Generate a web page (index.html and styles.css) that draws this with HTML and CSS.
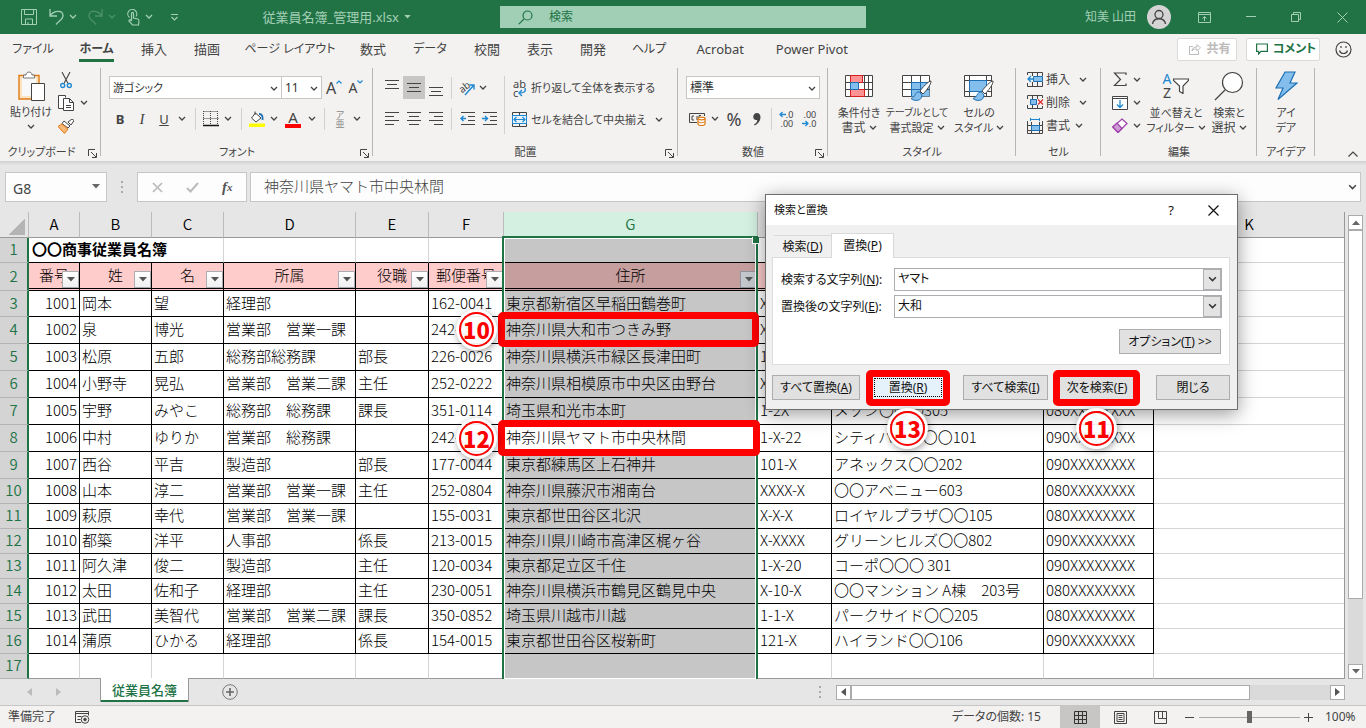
FILE: index.html
```html
<!DOCTYPE html>
<html lang="ja">
<head>
<meta charset="utf-8">
<title>従業員名簿_管理用.xlsx</title>
<link rel="stylesheet" href="styles.css">
</head>
<body>
<svg class="defs" aria-hidden="true">
  <symbol id="chev" viewBox="0 0 8 6"><path d="M1 1l3 3 3-3" fill="none" stroke="currentColor" stroke-width="1.3"/></symbol>
  <symbol id="launch" viewBox="0 0 9 9"><path d="M.5 7V.5H7M3 3l5 5M8.5 4v4.500H4" fill="none" stroke="#444"/></symbol>
  <symbol id="tri" viewBox="0 0 8 5"><path d="M0 0h8L4 4.500z" fill="currentColor"/></symbol>
  <symbol id="brush" viewBox="0 0 22 22"><path d="M21 1c-2-.5-9 7-11 10l3 3C16 11 21.500 4 21 1z" fill="#fff" stroke="#444"/><path d="M9.500 12C5 11 6 17 1 18.500c3 3 11 3 11-3.500z" fill="#83beec" stroke="#1e6fb4"/></symbol>
</svg>
<div class="app">
  <header class="titlebar">
    <div class="qat">
      <button aria-label="上書き保存"><svg width="18" height="18" viewBox="0 0 18 18" fill="none" stroke="currentColor"><path d="M1.500 1.500h15v15h-15zM4.500 1.500v5h9v-5M5.500 16v-5h7v5M8 16v-2"/></svg></button>
      <button aria-label="元に戻す"><svg width="15" height="16" viewBox="0 0 15 16" fill="none" stroke="currentColor" stroke-width="1.300"><path d="M1 0v7h7M1 7C4 2 13 0 14 6c.5 4-4 6-7 9.500"/></svg></button>
      <button aria-label="元に戻す履歴"><svg width="8" height="6"><use href="#chev"/></svg></button>
      <button class="dim" aria-label="やり直し"><svg width="15" height="16" viewBox="0 0 15 16" fill="none" stroke="currentColor" stroke-width="1.300"><path d="M14 0v7H7M14 7C11 2 2 0 1 6c-.5 4 4 6 7 9.500"/></svg></button>
      <button class="dim" aria-label="やり直し履歴"><svg width="8" height="6"><use href="#chev"/></svg></button>
      <button aria-label="タッチ/マウス"><svg width="13" height="17" viewBox="0 0 13 17" fill="none" stroke="currentColor" stroke-width="1.200"><path d="M2.500 8.500A4.500 4.500 0 1 1 9 7.500M4.500 12V4.500c0-1.500 2-1.500 2 0V9l4.500 1c1.500.5 1 3 .5 6H5.500L2 12c0-2 2-1 2.500 0"/></svg></button>
      <button aria-label="モード"><svg width="8" height="6"><use href="#chev"/></svg></button>
      <button aria-label="カスタマイズ"><svg width="9" height="9" viewBox="0 0 9 9" fill="none" stroke="currentColor" stroke-width="1.200"><path d="M1 1.500h7M1.500 4l3 3 3-3"/></svg></button>
      <span class="doc">従業員名簿_管理用.xlsx</span><svg width="7" height="4"><use href="#tri"/></svg>
    </div>
    <label class="search"><svg width="15" height="15" viewBox="0 0 15 15" fill="none" stroke="currentColor" stroke-width="1.200"><circle cx="9.500" cy="5.500" r="4.500"/><path d="M6 9L.8 14.200"/></svg><input type="text" placeholder="検索" aria-label="検索"></label>
    <div class="win">
      <span>知美 山田</span>
      <svg class="avatar" width="24" height="24" viewBox="0 0 24 24"><circle cx="12" cy="12" r="12" fill="#d4d4d4"/><g fill="none" stroke="#444" stroke-width="1.300"><circle cx="12" cy="9.500" r="4"/><path d="M5.500 19c1-7 12-7 13 0"/></g></svg>
      <button aria-label="リボンの表示オプション"><svg width="13" height="11" viewBox="0 0 13 11" fill="none" stroke="currentColor"><path d="M.5.5h12v10H.5zM.5 2.500h12M6.500 9V4.500M4.500 6.500l2-2 2 2"/></svg></button>
      <button aria-label="最小化"><svg width="10" height="2"><path d="M0 .5h10" stroke="currentColor"/></svg></button>
      <button aria-label="元に戻す(縮小)"><svg width="11" height="11" viewBox="0 0 11 11" fill="none" stroke="currentColor"><path d="M.5 2.500h7v7h-7zM2.500 2.500v-2h7v7h-2"/></svg></button>
      <button aria-label="閉じる"><svg width="11" height="11" viewBox="0 0 11 11"><path d="M.5.5l10 10M10.500.5l-10 10" stroke="currentColor"/></svg></button>
    </div>
  </header>

  <nav class="tabs">
    <button class="kana">ファイル</button><button class="on">ホーム</button><button>挿入</button><button>描画</button><button class="kana">ページ レイアウト</button><button>数式</button><button class="kana">データ</button><button>校閲</button><button>表示</button><button>開発</button><button class="kana">ヘルプ</button><button class="lat">Acrobat</button><button class="lat">Power Pivot</button>
    <div class="tabs-right">
      <button class="share"><svg width="12" height="12" viewBox="0 0 12 12" fill="none" stroke="currentColor"><path d="M4 3.500H.5v8h9V8M3 8c0-3 2-4 5-4V1.500L11.500 5 8 8V6C6 6 4 6 3 8z"/></svg>共有</button>
      <button class="comment"><svg width="12" height="12" viewBox="0 0 12 12" fill="none" stroke="currentColor" stroke-width="1.200"><path d="M.6 1h10.800v7.400H5L2.600 11V8.400h-2z"/></svg>コメント</button>
      <svg width="17" height="17" viewBox="0 0 17 17" fill="none" stroke="#444" stroke-width="1.200"><circle cx="8.500" cy="8.500" r="7.500"/><path d="M4.500 9.500c1 4 7 4 8 0M6 5v2M11 5v2" /></svg>
    </div>
  </nav>

  <section class="ribbon">
    <div class="group g-clip">
      <div class="g-body">
        <button class="big"><svg width="28" height="32" viewBox="0 0 28 32"><path d="M2 5.500h20V29H2z" fill="#fbe3c2" stroke="#e07b12" stroke-width="1.400"/><path d="M5 8h14v18H5z" fill="#f8f8f8"/><path d="M6.500 8V5H9c0-4 6-4 6 0h2.500v3z" fill="#fff" stroke="#777"/><path d="M14.500 13.500h13v17h-13z" fill="#fff" stroke="#444"/></svg><span class="tight">貼り付け</span><svg width="8" height="6"><use href="#chev"/></svg></button>
        <div class="clip-col">
          <button aria-label="切り取り"><svg width="12" height="17" viewBox="0 0 12 17" fill="none"><path d="M2 0l6 11.500M10 0L4 11.500" stroke="#444" stroke-width="1.100"/><circle cx="2.700" cy="13.500" r="2" stroke="#1e88d2" stroke-width="1.400"/><circle cx="9.300" cy="13.500" r="2" stroke="#1e88d2" stroke-width="1.400"/></svg></button>
          <button aria-label="コピー"><svg width="17" height="16" viewBox="0 0 17 16" fill="#fff" stroke="#444"><path d="M7 13.500H.5V.5h7v2"/><path d="M5.500 3.500h6l4 4v8h-10zM11.500 3.500v4h4M8 10.500h5M8 12.500h5"/></svg></button>
          <svg width="8" height="6"><use href="#chev"/></svg>
          <button aria-label="書式のコピー"><svg width="16" height="15" viewBox="0 0 16 15"><path d="M10 3l4-3 2 1.500L13 6z" fill="#fff" stroke="#444"/><path d="M6 2l6 5-2 2-6-4.500z" fill="#fff" stroke="#444"/><path d="M4 5l6 5-3.500 4.500L0 7.500z" fill="#f7b879" stroke="#e07b12"/></svg></button>
        </div>
      </div>
      <div class="g-name">クリップボード<svg width="9" height="9"><use href="#launch"/></svg></div>
    </div>

    <div class="group g-font">
      <div class="g-body rows">
        <div class="font1">
          <span class="sel"><select aria-label="フォント"><option>游ゴシック</option></select><svg width="8" height="6"><use href="#chev"/></svg></span>
          <span class="sel"><select aria-label="フォント サイズ"><option>11</option></select><svg width="8" height="6"><use href="#chev"/></svg></span>
          <button class="cap" aria-label="拡大">A<svg width="6" height="4" viewBox="0 0 6 4"><path d="M.5 3.500L3 1l2.500 2.500" fill="none" stroke="#1e88d2" stroke-width="1.200"/></svg></button>
          <button class="cap small" aria-label="縮小">A<svg width="6" height="4" viewBox="0 0 6 4"><path d="M.5.5L3 3 5.500.5" fill="none" stroke="#1e88d2" stroke-width="1.200"/></svg></button>
        </div>
        <div class="font2">
          <button><b>B</b></button><button class="ital">I</button><button><u>U</u></button><svg width="8" height="6"><use href="#chev"/></svg><i class="sep"></i>
          <button aria-label="罫線"><svg width="16" height="16" viewBox="0 0 16 16" stroke="#444" fill="none"><path d="M.5.5h14.500M.5 7.500h15M.5 0v14M7.500 0v14M14.500 0v14" stroke-dasharray="1 1"/><path d="M0 14.500h16" stroke="#111" stroke-width="1.500"/></svg></button><svg width="8" height="6"><use href="#chev"/></svg><i class="sep"></i>
          <button aria-label="塗りつぶし"><svg width="16" height="16" viewBox="0 0 16 16"><path d="M6.500 2L12 7l-5 4-4.500-4zM6 4V.5" fill="#fff" stroke="#444"/><path d="M10 3c3 0 4 2 3.500 6" fill="none" stroke="#1e6fb4" stroke-width="1.800"/><path d="M0 12.500h16V16H0z" fill="#ff0"/></svg></button><svg width="8" height="6"><use href="#chev"/></svg>
          <button class="fcolor" aria-label="フォントの色">A</button><svg width="8" height="6"><use href="#chev"/></svg><i class="sep"></i>
          <button class="ruby"><span>ア</span><span>亜</span></button><svg width="8" height="6"><use href="#chev"/></svg>
        </div>
      </div>
      <div class="g-name">フォント<svg width="9" height="9"><use href="#launch"/></svg></div>
    </div>

    <div class="group g-align">
      <div class="g-body">
        <div class="align-l">
          <button aria-label="上揃え"><svg width="14" height="20" stroke="#444"><path d="M0 2.500h14M2 6.500h10M0 10.500h14"/></svg></button>
          <button class="pressed" aria-label="上下中央揃え"><svg width="14" height="20" stroke="#444"><path d="M0 5.500h14M2 9.500h10M0 13.500h14"/></svg></button>
          <button aria-label="下揃え"><svg width="14" height="20" stroke="#444"><path d="M0 9.500h14M2 13.500h10M0 17.500h14"/></svg></button>
          <i class="sep"></i>
          <button aria-label="方向"><svg class="over" width="17" height="16" viewBox="0 0 17 16"><text x="0" y="11" font-size="10" fill="#444" transform="rotate(-38 5 8)">ab</text><path d="M6 15L15 5M10.500 5H15v4.500" fill="none" stroke="#1e88d2" stroke-width="1.400"/></svg></button>
          <svg class="left" width="8" height="6"><use href="#chev"/></svg>
          <button aria-label="左揃え"><svg width="14" height="14" stroke="#444"><path d="M0 .5h14M0 4.500h9M0 8.500h14M0 12.500h9"/></svg></button>
          <button aria-label="中央揃え"><svg width="14" height="14" stroke="#444"><path d="M0 .5h14M2 4.500h10M0 8.500h14M2 12.500h10"/></svg></button>
          <button aria-label="右揃え"><svg width="14" height="14" stroke="#444"><path d="M0 .5h14M5 4.500h9M0 8.500h14M5 12.500h9"/></svg></button>
          <i class="sep"></i>
          <button aria-label="インデントを減らす"><svg width="15" height="14" fill="none" stroke="#444"><path d="M1 .5h14M8 4.500h7M8 8.500h7M1 12.500h14"/><path d="M6 6.500H.8M3.500 4L1 6.500 3.500 9" stroke="#1e88d2" stroke-width="1.400"/></svg></button>
          <button aria-label="インデントを増やす"><svg width="15" height="14" fill="none" stroke="#444"><path d="M1 .5h14M8 4.500h7M8 8.500h7M1 12.500h14"/><path d="M0 6.500h5.500M3 4l2.500 2.500L3 9" stroke="#1e88d2" stroke-width="1.400"/></svg></button>
        </div>
        <div class="align-r">
          <button><span class="wrap-ico"><span>ab</span><span>c<svg width="8" height="9" viewBox="0 0 8 9"><path d="M7 0c1 4-1 5-6 5M4 2L1 5l3 3" fill="none" stroke="#1e88d2" stroke-width="1.400"/></svg></span></span><span>折り返して全体を表示する</span></button>
          <button><svg width="15" height="15" viewBox="0 0 15 15" fill="none"><path d="M.5.5h14v14H.5zM7.500 0v15" stroke="#444"/><path d="M.5 3.500h14v8H.5z" fill="#e8f3fb" stroke="#1e88d2"/><path d="M2 7.500h11M4.500 5L2 7.500 4.500 10M10.500 5L13 7.500 10.500 10" stroke="#1e88d2" stroke-width="1.200"/></svg><span>セルを結合して中央揃え</span><svg width="8" height="6"><use href="#chev"/></svg></button>
        </div>
      </div>
      <div class="g-name">配置<svg width="9" height="9"><use href="#launch"/></svg></div>
    </div>

    <div class="group g-num">
      <div class="g-body rows">
        <span class="sel"><select aria-label="表示形式"><option>標準</option></select><svg width="8" height="6"><use href="#chev"/></svg></span>
        <div class="num2">
          <button aria-label="通貨"><svg width="17" height="14" viewBox="0 0 17 14" fill="none"><path d="M8 10.500H.5v-9h15V4" stroke="#444"/><path d="M5 4H3v4h2M8 4v4M12 3.500H10V6" stroke="#444"/><path d="M9 6.500v5.500c0 2 7 2 7 0V6.500" fill="#fff" stroke="#e07b12" stroke-width="1.200"/><ellipse cx="12.500" cy="6.500" rx="3.500" ry="1.300" fill="#fff" stroke="#e07b12" stroke-width="1.200"/><path d="M9 9.500c0 1.500 7 1.500 7 0" stroke="#e07b12"/></svg></button>
          <svg width="8" height="6"><use href="#chev"/></svg>
          <button class="pct">%</button>
          <button aria-label="桁区切り"><svg width="8" height="13" viewBox="0 0 8 13"><path d="M4 0c5 0 5 9-2.500 12.500l-.5-1C4 10 4.500 8 4 7-1 8-1 0 4 0z" fill="#444"/></svg></button>
          <i class="sep"></i>
          <button class="dec"><span><svg width="7" height="7" viewBox="0 0 7 7"><path d="M7 3.500H1M3.500 1L1 3.500 3.500 6" fill="none" stroke="#1e88d2" stroke-width="1.300"/></svg>.0</span><span>.00</span></button>
          <button class="dec"><span>.00</span><span><svg width="7" height="7" viewBox="0 0 7 7"><path d="M0 3.500h6M3.500 1L6 3.500 3.500 6" fill="none" stroke="#1e88d2" stroke-width="1.300"/></svg>.0</span></button>
        </div>
      </div>
      <div class="g-name">数値<svg width="9" height="9"><use href="#launch"/></svg></div>
    </div>

    <div class="group g-style">
      <div class="g-body">
        <button class="big"><svg width="28" height="30" viewBox="0 0 28 30" fill="none"><path d="M.5 4.500h27v21H.5zM.5 11.500h27M.5 18.500h27M5.500 4v21M19.500 4v21M23.500 4v21" fill="#fff" stroke="#444"/><path d="M5.500 4.500h12v7h-12zM5.500 18.500h14v7h-14z" fill="#ff9393" stroke="#d62020"/><path d="M5.500 11.500h8v7h-8z" fill="#83beec" stroke="#1e6fb4"/></svg><span class="tight">条件付き</span><span>書式 <svg width="8" height="6"><use href="#chev"/></svg></span></button>
        <button class="big tight"><svg width="30" height="30" viewBox="0 0 30 30" fill="none"><path d="M.5 4.500h27v21H.5z" fill="#fff" stroke="#444"/><path d="M9.500 11.500h18v14h-18z" fill="#83beec"/><path d="M.5 11.500h27M.5 18.500h27M9.500 4v21M18.500 4v21" stroke="#444"/><path d="M9.500 11.500h18M9.500 18.500h10M9.500 11v14M18.500 11v7" stroke="#1e6fb4"/><use href="#brush" x="8" y="9" width="22" height="22"/></svg><span class="tiny">テーブルとして</span><span>書式設定 <svg width="8" height="6"><use href="#chev"/></svg></span></button>
        <button class="big tight"><svg width="30" height="30" viewBox="0 0 30 30" fill="none"><path d="M.5 4.500h27v21H.5zM.5 9.500h27M.5 20.500h27M5.500 4v21M22.500 4v21" fill="#fff" stroke="#444"/><path d="M5.500 9.500h17v11h-17z" fill="#83beec" stroke="#1e6fb4"/><use href="#brush" x="8" y="9" width="22" height="22"/></svg><span>セルの</span><span>スタイル <svg width="8" height="6"><use href="#chev"/></svg></span></button>
      </div>
      <div class="g-name">スタイル</div>
    </div>

    <div class="group g-cell">
      <div class="g-body">
        <button><svg width="17" height="15" viewBox="0 0 17 15" fill="none"><path d="M.5 3V.5h15V4M5.500 0v4M10.500 0v4M.5 11v3.500h15V10M5.500 10v4M10.500 10v4" stroke="#444"/><path d="M6.500 4.500h9v5h-9z" fill="#83beec" stroke="#1e6fb4"/><path d="M7 7H1M4 4L1 7l3 3" stroke="#1e88d2" stroke-width="1.300"/></svg><span>挿入</span><svg width="8" height="6"><use href="#chev"/></svg></button>
        <button><svg width="17" height="15" viewBox="0 0 17 15" fill="none"><path d="M.5 4V.5h15V3M5.500 0v4M10.500 0v4M.5 10v3.500h15V11M5.500 10v4M10.500 10v4" stroke="#444"/><path d="M3.500 4.500h6v5h-6z" fill="#83beec" stroke="#1e6fb4"/><path d="M11 4.500l5 5M16 4.500l-5 5" stroke="#e03030" stroke-width="1.300"/></svg><span>削除</span><svg width="8" height="6"><use href="#chev"/></svg></button>
        <button class="near"><svg width="17" height="16" viewBox="0 0 17 16" fill="none"><path d="M.5 3v12.500h15V3M.5 7.500h15M.5 12.500h15M4.500 4v11M12.500 4v11" stroke="#444"/><path d="M4.500 7.500h8v5h-8z" fill="#83beec" stroke="#1e6fb4"/><path d="M3 1.500h10M3.500 0v3M12.500 0v3" stroke="#1e88d2"/></svg><span>書式</span><svg width="8" height="6"><use href="#chev"/></svg></button>
      </div>
      <div class="g-name">セル</div>
    </div>

    <div class="group g-edit">
      <div class="g-body">
        <div class="edit-col">
          <button aria-label="合計"><svg width="16" height="15" viewBox="0 0 16 15"><path d="M14 3V1H2.500l6 6.500-6 6H14v-2" fill="none" stroke="#444" stroke-width="1.200"/></svg><svg width="8" height="6"><use href="#chev"/></svg></button>
          <button aria-label="フィル"><svg width="16" height="14" viewBox="0 0 16 14" fill="none"><path d="M.5.5h15v13H.5zM.5 2.500h15" fill="#fff" stroke="#444"/><path d="M8 4v7M5 8.500L8 11.500l3-3" stroke="#1e88d2" stroke-width="1.300"/></svg><svg width="8" height="6"><use href="#chev"/></svg></button>
          <button aria-label="クリア"><svg width="16" height="15" viewBox="0 0 16 15" fill="#fff" stroke="#9b3fa8" stroke-width="1.200"><path d="M10 1l5 4.500L6 14.500.8 9z"/><path d="M.8 9L5 5l5 5.500-4 4z" fill="#cf9ad6"/></svg><svg width="8" height="6"><use href="#chev"/></svg></button>
        </div>
        <button class="big tight"><span class="sort-ico"><span class="az"><span class="blue">A</span><span>Z</span></span><svg width="16" height="16" viewBox="0 0 16 16"><path d="M.5 1h15v1.500L10 8v7.500L6.500 13.500V8L.5 2.500z" fill="#fff" stroke="#444" stroke-width="1.200"/></svg></span><span>並べ替えと</span><span>フィルター <svg width="8" height="6"><use href="#chev"/></svg></span></button>
        <button class="big"><svg width="30" height="30" viewBox="0 0 30 30"><circle cx="18.500" cy="11.500" r="10" fill="#fff" stroke="#444" stroke-width="1.200"/><path d="M11 19L1 29" stroke="#444" stroke-width="1.300"/></svg><span class="tight">検索と</span><span>選択 <svg width="8" height="6"><use href="#chev"/></svg></span></button>
      </div>
      <div class="g-name">編集</div>
    </div>

    <div class="group g-idea">
      <div class="g-body"><button class="big tight"><svg width="24" height="30" viewBox="0 0 24 30"><path d="M11 1h10l-5 11h7L4 28.500 9 17H2z" fill="#83beec" stroke="#1e6fb4" stroke-width="1.200"/></svg><span>アイ</span><span>デア</span></button></div>
      <div class="g-name">アイデア</div>
    </div>
    <button class="collapse" aria-label="リボンを折りたたむ"><svg width="10" height="6" viewBox="0 0 10 6"><path d="M.5 5.500L5 1l4.500 4.500" fill="none" stroke="#444" stroke-width="1.200"/></svg></button>
  </section>

  <section class="fbar">
    <div class="namebox"><input type="text" value="G8" aria-label="名前ボックス"><button aria-label="名前一覧"><svg width="8" height="5"><use href="#tri"/></svg></button></div>
    <span class="dots"></span>
    <div class="fx">
      <button aria-label="キャンセル"><svg width="11" height="11"><path d="M1 1l9 9M10 1l-9 9" stroke="#bbb" stroke-width="1.700"/></svg></button>
      <button aria-label="入力"><svg width="13" height="11"><path d="M1 6l3.500 3.500L12 1" stroke="#bbb" stroke-width="2" fill="none"/></svg></button>
      <button class="fn">f<small>x</small></button>
    </div>
    <div class="formula"><input type="text" value="神奈川県ヤマト市中央林間" aria-label="数式バー"><svg width="9" height="7"><use href="#chev"/></svg></div>
  </section>

  <main class="sheet">
    <div class="grid">
      <table>
        <colgroup><col class="w-h"><col class="w-a"><col class="w-b"><col class="w-b"><col class="w-d"><col class="w-e"><col class="w-f"><col class="w-g"><col class="w-i"><col class="w-j"><col class="w-k"><col></colgroup>
        <thead><tr><th class="corner"></th><th>A</th><th>B</th><th>C</th><th>D</th><th>E</th><th>F</th><th class="selcol">G</th><th>H</th><th>I</th><th>J</th><th>K</th></tr></thead>
        <tbody>
        <tr class="r-title"><th>1</th><td colspan="3">〇〇商事従業員名簿</td><td></td><td></td><td></td><td></td><td></td><td></td><td></td><td></td></tr>
        <tr class="r-head"><th>2</th><td>番号<button aria-label="フィルター"><svg width="8" height="5"><use href="#tri"/></svg></button></td><td>姓<button aria-label="フィルター"><svg width="8" height="5"><use href="#tri"/></svg></button></td><td>名<button aria-label="フィルター"><svg width="8" height="5"><use href="#tri"/></svg></button></td><td>所属<button aria-label="フィルター"><svg width="8" height="5"><use href="#tri"/></svg></button></td><td>役職<button aria-label="フィルター"><svg width="8" height="5"><use href="#tri"/></svg></button></td><td>郵便番号<button aria-label="フィルター"><svg width="8" height="5"><use href="#tri"/></svg></button></td><td>住所<button aria-label="フィルター"><svg width="8" height="5"><use href="#tri"/></svg></button></td><td></td><td></td><td></td><td></td></tr>
        <tr class="r-first"><th>3</th><td>1001</td><td>岡本</td><td>望</td><td>経理部</td><td></td><td>162-0041</td><td>東京都新宿区早稲田鶴巻町</td><td>X</td><td></td><td></td><td></td></tr>
        <tr class="tall"><th>4</th><td>1002</td><td>泉</td><td>博光</td><td>営業部　営業一課</td><td></td><td>242-0</td><td>神奈川県大和市つきみ野</td><td>X</td><td></td><td></td><td></td></tr>
        <tr class="tall"><th>5</th><td>1003</td><td>松原</td><td>五郎</td><td>総務部総務課</td><td>部長</td><td>226-0026</td><td>神奈川県横浜市緑区長津田町</td><td>1</td><td></td><td></td><td></td></tr>
        <tr class="tall"><th>6</th><td>1004</td><td>小野寺</td><td>晃弘</td><td>営業部　営業二課</td><td>主任</td><td>252-0222</td><td>神奈川県相模原市中央区由野台</td><td>X</td><td></td><td></td><td></td></tr>
        <tr class="tall"><th>7</th><td>1005</td><td>宇野</td><td>みやこ</td><td>総務部　総務課</td><td>課長</td><td>351-0114</td><td>埼玉県和光市本町</td><td>1-2X</td><td>メゾン〇〇〇305</td><td>080XXXXXXXX</td><td></td></tr>
        <tr class="tall"><th>8</th><td>1006</td><td>中村</td><td>ゆりか</td><td>営業部　総務課</td><td></td><td>242-0</td><td class="active">神奈川県ヤマト市中央林間</td><td>1-X-22</td><td>シティハイツ〇〇101</td><td>090XXXXXXXX</td><td></td></tr>
        <tr class="tall"><th>9</th><td>1007</td><td>西谷</td><td>平吉</td><td>製造部</td><td>部長</td><td>177-0044</td><td>東京都練馬区上石神井</td><td>101-X</td><td>アネックス〇〇202</td><td>090XXXXXXXX</td><td></td></tr>
        <tr><th>10</th><td>1008</td><td>山本</td><td>淳二</td><td>営業部　営業一課</td><td>主任</td><td>252-0804</td><td>神奈川県藤沢市湘南台</td><td>XXXX-X</td><td>〇〇アベニュー603</td><td>080XXXXXXXX</td><td></td></tr>
        <tr><th>11</th><td>1009</td><td>萩原</td><td>幸代</td><td>営業部　営業一課</td><td></td><td>155-0031</td><td>東京都世田谷区北沢</td><td>X-X-X</td><td>ロイヤルプラザ〇〇105</td><td>080XXXXXXXX</td><td></td></tr>
        <tr><th>12</th><td>1010</td><td>都築</td><td>洋平</td><td>人事部</td><td>係長</td><td>213-0015</td><td>神奈川県川崎市高津区梶ヶ谷</td><td>X-XXXX</td><td>グリーンヒルズ〇〇802</td><td>090XXXXXXXX</td><td></td></tr>
        <tr><th>13</th><td>1011</td><td>阿久津</td><td>俊二</td><td>製造部</td><td>主任</td><td>120-0034</td><td>東京都足立区千住</td><td>1-X-20</td><td>コーポ〇〇〇 301</td><td>090XXXXXXXX</td><td></td></tr>
        <tr><th>14</th><td>1012</td><td>太田</td><td>佐和子</td><td>経理部</td><td>主任</td><td>230-0051</td><td>神奈川県横浜市鶴見区鶴見中央</td><td>X-10-X</td><td>〇〇マンション A棟　203号</td><td>080XXXXXXXX</td><td></td></tr>
        <tr><th>15</th><td>1013</td><td>武田</td><td>美智代</td><td>営業部　営業二課</td><td>課長</td><td>350-0852</td><td>埼玉県川越市川越</td><td>1-1-X</td><td>パークサイド〇〇205</td><td>080XXXXXXXX</td><td></td></tr>
        <tr><th>16</th><td>1014</td><td>蒲原</td><td>ひかる</td><td>経理部</td><td>係長</td><td>154-0015</td><td>東京都世田谷区桜新町</td><td>121-X</td><td>ハイランド〇〇106</td><td>090XXXXXXXX</td><td></td></tr>
        <tr class="r-empty"><th>17</th><td></td><td></td><td></td><td></td><td></td><td></td><td></td><td></td><td></td><td></td><td></td></tr>
        </tbody>
      </table>
      <div class="selection"></div>
      <div class="mark m10"></div><div class="num n10">10</div>
      <div class="mark m12"></div><div class="num n12">12</div>
    </div>
    <div class="vscroll">
      <button aria-label="上へ"><svg class="flip" width="8" height="5"><use href="#tri"/></svg></button>
      <div class="vtrack"><div class="vthumb"></div></div>
      <button aria-label="下へ"><svg width="8" height="5"><use href="#tri"/></svg></button>
    </div>
  </main>

  <section class="sheettabs">
    <svg width="5" height="8"><path d="M5 0v8L0 4z" fill="#bbb"/></svg>
    <svg width="5" height="8"><path d="M0 0v8l5-4z" fill="#bbb"/></svg>
    <button class="stab">従業員名簿</button>
    <button aria-label="新しいシート"><svg width="16" height="16" viewBox="0 0 16 16" fill="none" stroke="#777"><circle cx="8" cy="8" r="7.300"/><path d="M8 4v8M4 8h8" stroke="#666" stroke-width="1.600"/></svg></button>
    <span class="dots"></span>
    <div class="hscroll">
      <button aria-label="左へ"><svg width="5" height="8"><path d="M5 0v8L0 4z" fill="#555"/></svg></button>
      <div class="hthumb"></div>
      <button aria-label="右へ"><svg width="5" height="8"><path d="M0 0v8l5-4z" fill="#555"/></svg></button>
    </div>
  </section>

  <footer class="status">
    <span>準備完了</span>
    <svg class="macro" width="15" height="13" viewBox="0 0 15 13" fill="none" stroke="#444"><path d="M6 11.500H.5V.5h13v4M.5 2.500h13M2.500 5.500h4M2.500 8.500h3"/><circle cx="10" cy="8.500" r="3.800"/><circle cx="10" cy="8.500" r="1.300" fill="#444"/></svg>
    <span class="count">データの個数: 15</span>
    <button class="view on" aria-label="標準"><svg width="13" height="13" fill="none" stroke="#333"><path d="M.5.5h12v12H.5zM4.500 0v13M8.500 0v13M0 4.500h13M0 8.500h13"/></svg></button>
    <button class="view" aria-label="ページ レイアウト"><svg width="13" height="13" fill="none" stroke="#444"><path d="M.5.5h12v12H.5zM3 2.500h7v8H3zM4.500 4.500h4M4.500 6.500h4M4.500 8.500h4"/></svg></button>
    <button class="view" aria-label="改ページ プレビュー"><svg width="13" height="13" fill="none" stroke="#444"><path d="M.5.5h12v12H.5zM4.500 0v7.500h4V0M8.500 7.500h4"/></svg></button>
    <button class="zb" aria-label="縮小"><svg width="9" height="9"><path d="M0 4.500h9" stroke="#444"/></svg></button>
    <input type="range" min="0" max="100" value="50" aria-label="ズーム">
    <button class="zb" aria-label="拡大"><svg width="9" height="9"><path d="M0 4.500h9M4.500 0v9" stroke="#444"/></svg></button>
    <span class="zoom">100%</span>
  </footer>

  <div class="dialog" role="dialog" aria-label="検索と置換">
    <div class="d-title"><span>検索と置換</span><button>?</button><button aria-label="閉じる"><svg width="11" height="11"><path d="M.5.5l10 10M10.500.5l-10 10" stroke="#111" stroke-width="1.200"/></svg></button></div>
    <div class="d-tabs"><button>検索(<u>D</u>)</button><button class="on">置換(<u>P</u>)</button></div>
    <div class="d-panel">
      <label for="find">検索する文字列(<u>N</u>):</label>
      <div class="combo"><input id="find" type="text" value="ヤマト"><button aria-label="一覧"><svg width="9" height="7"><use href="#chev"/></svg></button></div>
      <label for="repl">置換後の文字列(<u>E</u>):</label>
      <div class="combo"><input id="repl" type="text" value="大和"><button aria-label="一覧"><svg width="9" height="7"><use href="#chev"/></svg></button></div>
      <button class="btn opt">オプション(<u>T</u>) &gt;&gt;</button>
    </div>
    <div class="d-btns">
      <button class="btn">すべて置換(<u>A</u>)</button>
      <button class="btn focus">置換(<u>R</u>)</button>
      <button class="btn">すべて検索(<u>I</u>)</button>
      <button class="btn">次を検索(<u>F</u>)</button>
      <button class="btn">閉じる</button>
    </div>
    <div class="mark m13"></div><div class="num n13">13</div>
    <div class="mark m11"></div><div class="num n11">11</div>
  </div>
</div>
</body>
</html>
```
FILE: styles.css
```css
* { box-sizing: border-box; }
body { margin: 0; font: 12px/16px "Noto Sans", "Noto Sans CJK JP", sans-serif; font-feature-settings: "palt"; color: #444; }
button { border: 0; padding: 0; background: none; font: inherit; color: inherit; font-feature-settings: inherit; display: inline-flex; align-items: center; justify-content: center; white-space: nowrap; }
input, select { font: inherit; color: inherit; font-feature-settings: inherit; border: 0; background: none; padding: 0; margin: 0; min-width: 0; outline: 0; appearance: none; }
svg { display: block; flex: none; }
.over { overflow: visible; }
.defs { position: absolute; width: 0; height: 0; }
.app { position: relative; display: flex; flex-direction: column; height: 100vh; min-width: 1366px; overflow: hidden; background: #e6e6e6; }

.titlebar { display: grid; grid-template-columns: 1fr 366px 1fr; align-items: center; height: 34px; flex: none; background: #217346; color: #a3cfb5; font-size: 13px; }
.qat { display: grid; grid-template-columns: 24px 15px 14px 15px 14px 13px 20px 24px 200px auto; column-gap: 5px; align-items: center; padding-left: 20px; justify-content: start; }
.qat button { justify-content: start; }
.qat .doc { text-align: right; }
.qat .dim { color: #4d9069; }
.search { display: flex; align-items: center; gap: 16px; height: 22px; padding-left: 18px; background: #a0cfb5; color: #217346; }
.search input { flex: 1; font-size: 12px; }
.search input::placeholder { color: #217346; opacity: 1; }
.win { display: flex; align-items: center; justify-content: flex-end; padding-right: 18px; font-size: 12px; }
.win .avatar { margin: 0 27px 0 11px; }
.win button { margin-left: 35px; }
.win .avatar + button { margin-left: 0; }

.tabs { display: grid; grid-template-columns: 38px 35px 26px 26px 86px 26px 34px 26px 26px 26px 32px 52px 77px 1fr; column-gap: 27px; justify-items: center; align-items: center; height: 32px; flex: none; padding-left: 14px; background: #f3f2f1; font-size: 13px; line-height: 18px; }
.tabs > button { height: 32px; padding-bottom: 2px; }
.tabs > .kana { font-size: 12px; }
.tabs > .on { font-size: 12px; font-weight: 700; border-bottom: 3px solid #217346; height: 24px; padding-bottom: 0; }
.tabs .lat { justify-self: end; }
.tabs-right { display: flex; justify-self: end; align-items: center; gap: 9px; padding: 0 14px 2px 0; }
.tabs-right button { height: 23px; gap: 5px; background: #fff; border: 1px solid #dcdad8; border-radius: 2px; font-size: 12px; }
.tabs-right svg:last-child { margin-left: 6px; }
.share { width: 60px; color: #bdbbb9; font-weight: 700; }
.comment { width: 74px; color: #217346; font-weight: 700; }

.ribbon { display: flex; height: 95px; flex: none; padding-top: 2px; background: #f3f2f1; position: relative; }
.group { position: relative; display: flex; flex-direction: column; height: 92px; flex: none; }
.group::after { content: ""; position: absolute; right: 0; top: 0; bottom: 4px; width: 1px; background: #b8b6b4; }
.g-body { flex: 1; display: flex; min-height: 0; }
.g-name { height: 16px; text-align: center; font-size: 11px; position: relative; }
.g-name svg { position: absolute; right: 4px; top: 5px; }
.g-clip { width: 101px; } .g-font { width: 272px; } .g-align { width: 305px; } .g-num { width: 150px; }
.g-style { width: 188px; } .g-cell { width: 85px; } .g-edit { width: 156px; } .g-idea { width: 58px; }
.g-clip .g-name { padding-right: 18px; }
.tight { font-size: 11px; }
.tiny { font-size: 10px; }
.big { flex-direction: column; justify-content: flex-start; line-height: 15px; padding-top: 3px; }
.big > svg:first-child { margin-bottom: 4px; }
.big > span { display: flex; align-items: center; gap: 3px; }
.collapse { position: absolute; right: 8px; bottom: 4px; }

.g-clip .g-body { padding-left: 10px; }
.g-clip .big { width: 42px; padding-top: 2px; }
.g-clip .big > svg:first-child { margin-bottom: 2px; }
.g-clip .big > svg:last-child { margin-top: 5px; }
.clip-col { display: grid; grid-template-columns: 18px 8px; grid-template-rows: 22px 24px 22px; column-gap: 5px; align-content: start; align-items: center; justify-items: center; padding: 1px 0 0 5px; }
.clip-col button:first-child { grid-column: 1 / 3; justify-self: start; padding-left: 3px; }

.rows { flex-direction: column; padding: 8px 8px 0; gap: 9px; }
.font1 { display: grid; grid-template-columns: 173px 40px 24px 20px; }
.sel { position: relative; display: flex; height: 23px; border: 1px solid #c8c6c4; background: #fff; }
.font1 .sel + .sel { border-left: 0; }
.sel select { flex: 1; padding: 0 3px; color: #333; }
.font1 .sel:first-child select { font-size: 11px; }
.sel svg { position: absolute; right: 3px; top: 9px; pointer-events: none; }
.cap { font-size: 16px; align-items: center; }
.cap.small { font-size: 14px; }
.cap svg { align-self: flex-start; margin-top: 4px; }
.font2 { display: grid; grid-template-columns: 22px 22px 22px 14px 12px 20px 14px 12px 20px 14px 24px 14px 11px 20px 14px; height: 22px; align-items: center; justify-items: center; font-size: 13px; }
.sep { width: 1px; height: 22px; background: #d2d0ce; }
.ital { font-family: "Liberation Serif", serif; font-style: italic; font-size: 15px; }
.fcolor { width: 16px; height: 18px; border-bottom: 4px solid #f00; font-size: 15px; }
.ruby { flex-direction: column; color: #888; font-size: 9px; line-height: 9px; }

.g-align .g-body { padding: 8px 0 0 8px; }
.align-l { display: grid; grid-template-columns: 22px 22px 22px 8px 24px 20px; grid-template-rows: 23px 22px; row-gap: 9px; align-content: start; align-items: center; justify-items: center; }
.align-l .pressed { background: #c8c6c4; width: 22px; height: 23px; }
.align-l .left { justify-self: start; }
.align-r { display: flex; flex-direction: column; gap: 9px; margin-left: 5px; padding-left: 7px; border-left: 1px solid #d2d0ce; height: 58px; font-size: 11px; }
.align-r button { height: 23px; gap: 4px; justify-content: flex-start; }
.align-r button > svg:last-child { margin-left: 5px; }
.wrap-ico { display: flex; flex-direction: column; width: 15px; padding-left: 1px; font-size: 11px; line-height: 9px; }
.wrap-ico span { display: flex; }

.num2 { display: grid; grid-template-columns: 22px 14px 24px 22px 6px 24px 22px; align-items: center; justify-items: center; height: 22px; }
.pct { font-size: 18px; }
.dec { flex-direction: column; align-items: flex-end; font-size: 9px; line-height: 9px; }
.dec span { display: flex; align-items: center; }

.g-style .g-body { display: grid; grid-template-columns: 46px 68px 54px; column-gap: 1px; padding-left: 8px; }
.g-cell .g-body { flex-direction: column; padding-left: 11px; }
.g-cell button { height: 23px; gap: 2px; justify-content: flex-start; }
.g-cell button > svg:last-child { margin-left: 7px; }
.g-cell .near > svg:last-child { margin-left: 3px; }
.g-edit .g-body { padding-left: 11px; }
.edit-col { display: flex; flex-direction: column; width: 32px; }
.edit-col button { height: 23px; gap: 5px; justify-content: flex-start; }
.g-edit .big.tight { width: 64px; }
.g-edit .big:last-child { width: 42px; }
.big .sort-ico { height: 30px; margin-bottom: 4px; gap: 2px; }
.az { display: flex; flex-direction: column; font-size: 14px; line-height: 14px; }
.blue { color: #1e88d2; }
.g-idea .g-body { justify-content: center; }

.fbar { display: flex; height: 51px; flex: none; padding: 11px 5px 10px; background: linear-gradient(#cfcfcf, #e6e6e6 4px); }
.fbar > div { border: 1px solid #c6c6c6; background: #fdfdfd; display: flex; align-items: center; }
.namebox { width: 102px; padding: 3px 6px 0 7px; font-size: 14px; }
.namebox input { flex: 1; }
.namebox svg { margin-bottom: 5px; color: #666; }
.dots { width: 2px; height: 12px; align-self: center; background: repeating-linear-gradient(#aaa 0 2px, transparent 2px 5px); }
.fbar .dots { margin: 0 14px; }
.fx { width: 110px; justify-content: space-around; padding: 0 2px; }
.fn { font: italic 700 15px "Liberation Serif", serif; color: #555; }
.fn small { font-size: 11px; }
.fbar .formula { flex: 1; margin-left: 3px; padding: 0 3px 0 13px; }
.formula input { flex: 1; padding-bottom: 2px; font: 300 15px/20px "Noto Sans CJK JP", sans-serif; font-feature-settings: normal; }

.sheet { flex: 1; display: flex; min-height: 0; overflow: hidden; }
.grid { position: relative; flex: 1; border-right: 1px solid #999; font: 300 15px/20px "Noto Sans CJK JP", sans-serif; font-feature-settings: normal; color: #000; }
table { table-layout: fixed; width: 100%; border-collapse: separate; border-spacing: 0; }
.w-h { width: 29px; } .w-a { width: 51px; } .w-b { width: 72px; } .w-d { width: 132px; } .w-e { width: 73px; }
.w-f { width: 75px; } .w-g { width: 254px; } .w-i { width: 74px; } .w-j { width: 212px; } .w-k { width: 110px; }
th, td { padding: 0 2px 2px; white-space: nowrap; overflow: hidden; line-height: 20px; }
thead th { height: 26px; background: #e6e6e6; font-weight: 350; border-bottom: 1px solid #999; border-right: 1px solid #bbb; }
thead th:last-child { border-right: 0; }
thead .selcol { background: #d3f0e0; color: #217346; }
thead .corner { background: linear-gradient(135deg, #e6e6e6 0 50%, #b4b4b4 50%) 8px 6px / 17px 17px no-repeat #e6e6e6; }
tbody th { background: #d4d4d4; color: #217346; font-weight: 350; border-right: 2px solid #217346; border-bottom: 1px solid #b4b4b4; }
td { height: 25px; background: #fff; border-right: 1px solid #000; border-bottom: 1px solid #000; }
td:nth-child(2) { text-align: right; }
td:nth-child(8) { background: #c6c6c6; }
td.active { background: #fff; }
td:last-child { border-color: #d4d4d4; border-right: 0; }
.tall td { height: 27px; }
.r-first td { height: 26px; }
.r-title td { border-right-color: #d4d4d4; }
.r-title td:nth-child(2) { text-align: left; font-weight: 700; padding-left: 3px; }
.r-title td:nth-child(6) { background: #c6c6c6; }
.r-title td:nth-child(8) { background: #fff; }
.r-head td { position: relative; height: 28px; background: #fcc; text-align: center; border-bottom: 3px double #000; }
.r-head td:nth-child(8) { background: #c69e9e; }
.r-head td:last-child { background: #fff; border-bottom: 1px solid #d4d4d4; }
.r-head button { position: absolute; right: 0; bottom: 0; width: 17px; height: 17px; border: 1px solid #abadb3; background: linear-gradient(#fff, #f0f0f0); color: #555; }
.r-head td:nth-child(8) button { background: #c4c8cc; border-color: #90959b; }
.r-empty td { border-color: #d4d4d4; border-bottom-color: #999; }
.selection { position: absolute; left: 502px; top: 24px; bottom: 0; width: 256px; border: 2px solid #217346; border-bottom: 0; box-shadow: inset 0 0 0 1px #fff; }
.selection::after { content: ""; position: absolute; right: -3px; top: -1px; width: 6px; height: 6px; background: #217346; border: 1px solid #fff; border-width: 0 0 1px 1px; }
.mark { position: absolute; border: 7px solid #f00; border-radius: 5px; pointer-events: none; }
.num { position: absolute; width: 35px; height: 35px; border: 2px solid #f00; border-radius: 50%; background: rgba(255, 255, 255, .93); box-shadow: 0 0 0 3px #fff, 1px 2px 7px 3px rgba(0, 0, 0, .35); color: #f00; font: 900 22px/30px "Noto Sans CJK JP", sans-serif; font-feature-settings: normal; text-align: center; }
.m10 { left: 498px; top: 100px; width: 261px; height: 35px; }
.n10 { left: 459px; top: 100px; }
.m12 { left: 498px; top: 208px; width: 262px; height: 36px; }
.n12 { left: 459px; top: 209px; }

.vscroll { display: flex; flex-direction: column; width: 21px; padding: 3px 3px 0; }
.vscroll button, .hscroll button { width: 15px; height: 15px; border: 1px solid #ababab; background: #fff; color: #666; }
.flip { transform: rotate(180deg); }
.vtrack { flex: 1; background: #dadada; }
.vthumb { height: 85%; background: #fff; border: 1px solid #ababab; }

.sheettabs { display: flex; align-items: center; height: 27px; flex: none; padding-left: 27px; border-bottom: 1px solid #c6c6c6; }
.sheettabs > svg + svg { margin-left: 24px; }
.sheettabs button + .dots { margin-left: auto; }
.stab { align-self: flex-start; width: 89px; height: 24px; margin: -1px 33px 0 39px; background: #fff; color: #217346; border: solid #999; border-width: 0 1px; box-shadow: inset 0 -2px #217346; font-weight: 500; font-size: 13px; position: relative; }
.hscroll { display: flex; width: 509px; height: 15px; margin: 0 21px 0 15px; background: #dadada; justify-content: space-between; }
.hthumb { width: 399px; margin-right: auto; background: #fff; border: 1px solid #ababab; }

.status { display: flex; align-items: center; height: 22px; flex: none; padding: 0 8px; background: #f3f2f1; }
.macro { margin-left: 19px; }
.count { margin: 0 19px 0 auto; }
.view { width: 40px; height: 22px; }
.view.on { background: #c8c6c4; }
.zb { margin-left: 5px; }
.status input { width: 101px; height: 12px; margin: 0 4px 0 5px; background: linear-gradient(#aaa, #aaa) 0 50% / 100% 1px no-repeat; }
.status input + .zb { margin-left: 0; }
.status input::-webkit-slider-thumb { appearance: none; width: 5px; height: 12px; background: #666; }
.zoom { margin-left: 12px; width: 33px; }

.dialog { position: absolute; left: 765px; top: 194px; width: 473px; background: #f0f0f0; border: 1px solid #6e6e6e; box-shadow: 0 4px 18px rgba(0, 0, 0, .4); color: #111; padding: 0 6px 9px; }
.d-title { display: flex; align-items: center; gap: 34px; height: 30px; margin: 0 -6px; padding: 0 18px 0 8px; background: #fff; }
.d-title span { flex: 1; font-size: 11px; }
.d-title button { font-size: 13px; }
.d-tabs { display: flex; align-items: flex-end; height: 32px; padding-left: 2px; }
.d-tabs button { width: 57px; height: 22px; border-top: 1px solid #d9d9d9; }
.d-tabs .on { position: relative; width: 63px; height: 25px; margin-bottom: -1px; background: #fff; border: 1px solid #d9d9d9; border-bottom: 0; }
.d-panel { display: grid; grid-template-columns: 113px 328px; grid-template-rows: 23px 23px 26px; row-gap: 4px; align-items: center; width: 458px; height: 108px; padding: 10px 0 0 8px; border: 1px solid #dcdcdc; background: #fff; }
.combo { display: flex; height: 23px; border: 1px solid #abadb3; }
.combo input { flex: 1; padding: 0 3px 2px; font-size: 12px; }
.combo button { width: 18px; border: 1px solid #b0b0b0; background: #e3e3e3; color: #333; }
.btn { height: 25px; background: #e1e1e1; border: 1px solid #adadad; }
.opt { grid-column: 2; justify-self: end; width: 102px; align-self: start; margin: 7px 1px 0 0; }
.d-panel .opt { height: 25px; }
.d-btns { display: grid; grid-template-columns: 88px 74px 85px 76px 74px; column-gap: 11px; padding-top: 10px; }
.d-btns .btn:nth-child(3) { margin-left: 7px; margin-right: -7px; }
.d-btns .btn:nth-child(4) { margin-left: 7px; margin-right: -7px; }
.d-btns .btn:nth-child(5) { margin-left: 17px; margin-right: -17px; }
.focus { background: #e5f1fb; border-color: #0078d7; outline: 1px dotted #000; outline-offset: -4px; }
.m13 { left: 100px; top: 175px; width: 84px; height: 36px; }
.m11 { left: 287px; top: 175px; width: 87px; height: 36px; }
.n13 { left: 124px; top: 216px; }
.n11 { left: 313px; top: 216px; }
```
